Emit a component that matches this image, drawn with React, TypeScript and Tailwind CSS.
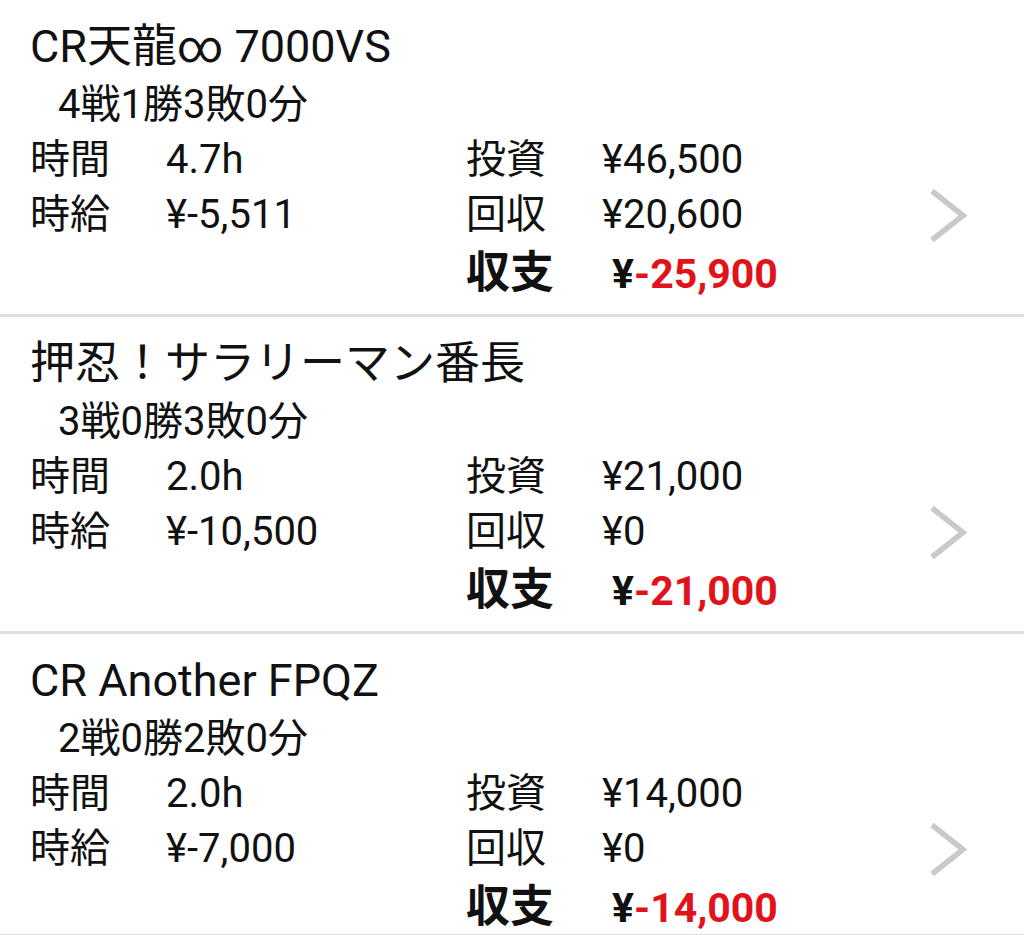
const CJK = "font-['Noto_Sans_CJK_JP',sans-serif]";
const LATIN = "font-['Roboto','Noto_Sans_CJK_JP',sans-serif]";

type Machine = {
  name: string;
  record: string;
  hours: string;
  perHour: string;
  invest: string;
  collect: string;
  balance: string;
};

const MACHINES: Machine[] = [
  {
    name: "CR天龍∞ 7000VS",
    record: "4戦1勝3敗0分",
    hours: "4.7h",
    perHour: "¥-5,511",
    invest: "¥46,500",
    collect: "¥20,600",
    balance: "-25,900",
  },
  {
    name: "押忍！サラリーマン番長",
    record: "3戦0勝3敗0分",
    hours: "2.0h",
    perHour: "¥-10,500",
    invest: "¥21,000",
    collect: "¥0",
    balance: "-21,000",
  },
  {
    name: "CR Another FPQZ",
    record: "2戦0勝2敗0分",
    hours: "2.0h",
    perHour: "¥-7,000",
    invest: "¥14,000",
    collect: "¥0",
    balance: "-14,000",
  },
];

// outer div keeps a CJK strut so every line sits on the same baseline
function Cell({ label, value, className }: { label: string; value: string; className?: string }) {
  return (
    <div className={`${CJK} text-[40px] ${className ?? ""}`}>
      <span className={LATIN}>
        <span className="inline-block w-[136px]">{label}</span>
        {value}
      </span>
    </div>
  );
}

function Chevron() {
  return (
    <svg width="40" height="60" viewBox="0 0 40 60" fill="none" aria-hidden="true" className="shrink-0 self-center">
      <polyline points="4,6 35,30.5 4,55" stroke="#c9c9c9" strokeWidth="5.5" strokeLinejoin="miter" />
    </svg>
  );
}

function MachineRow({ m }: { m: Machine }) {
  return (
    <div className="border-b-[3px] border-[#e0e0e0] bg-white pl-[30px] pr-[56px] pt-[11px] pb-[14px] last:pb-0 text-[#111]">
      <div className={`${CJK} h-[63px] text-[45px] leading-[63px] whitespace-nowrap`}>
        <span className={LATIN}>{m.name}</span>
      </div>
      <div className={`${CJK} h-[55px] pl-[28px] text-[40px] leading-[55px]`}>
        <span className={LATIN}>{m.record}</span>
      </div>
      <div className="flex">
        <div className="flex-1">
          <div className="flex h-[55px] leading-[55px]">
            <Cell className="w-[436px]" label="時間" value={m.hours} />
            <Cell label="投資" value={m.invest} />
          </div>
          <div className="flex h-[54px] leading-[54px]">
            <Cell className="w-[436px]" label="時給" value={m.perHour} />
            <Cell label="回収" value={m.collect} />
          </div>
          <div className="flex h-[62px] leading-[62px]">
            <div className="w-[436px]" />
            <div className={`${CJK} text-[44px] font-bold`}>
              <span className={LATIN}>
                <span className="inline-block w-[146px]">収支</span>
                <span className="text-[41px]">
                  ¥<span className="text-[#e2121a]">{m.balance}</span>
                </span>
              </span>
            </div>
          </div>
        </div>
        <Chevron />
      </div>
    </div>
  );
}

export default function App() {
  return (
    <div className="h-[935px] w-[1024px] overflow-hidden bg-white">
      {MACHINES.map((m) => (
        <MachineRow key={m.name} m={m} />
      ))}
    </div>
  );
}
